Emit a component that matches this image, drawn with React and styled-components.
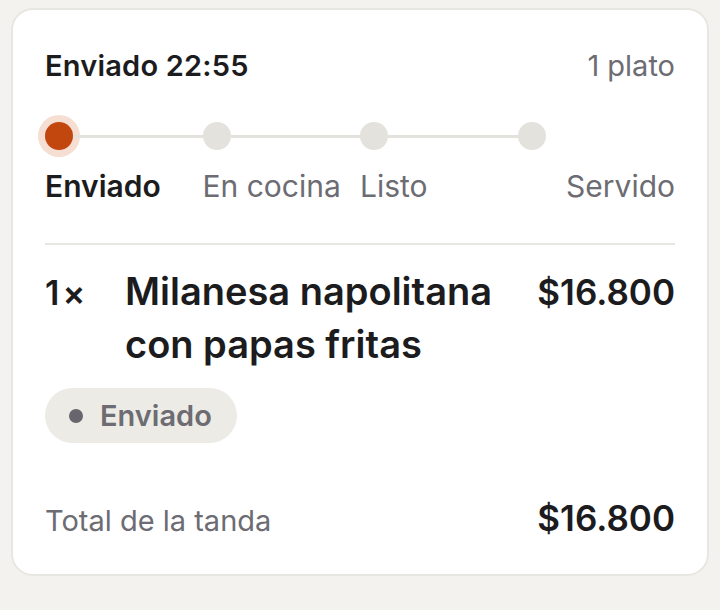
import React from "react";
import styled, { createGlobalStyle } from "styled-components";

const Global = createGlobalStyle`
  body {
    margin: 0;
    background: #f4f2ee;
    font-family: Inter, "Noto Sans", sans-serif;
    color: #1c1c1e;
  }
`;

const Page = styled.div`
  padding: 8px 11px;
`;

const Card = styled.div`
  background: #fff;
  border: 2px solid #e8e6e1;
  border-radius: 22px;
  padding: 38px 32px 36px;
`;

const Header = styled.div`
  display: flex;
  justify-content: space-between;
  align-items: baseline;
  line-height: 36px;
`;

const Title = styled.span`
  font-size: 29px;
  font-weight: 600;
  letter-spacing: 0.2px;
`;

const Muted = styled.span`
  font-size: 29px;
  color: #6c6c72;
`;

const Steps = styled.div`
  display: grid;
  grid-template-columns: repeat(4, 1fr);
  margin-top: 30px;
`;

const Step = styled.div`
  display: flex;
  flex-direction: column;
  align-items: ${(p) => (p.$last ? "flex-end" : "stretch")};
`;

const Track = styled.div`
  display: flex;
  align-items: center;
  width: 100%;
  height: 44px;
`;

const Dot = styled.span`
  width: 28px;
  height: 28px;
  border-radius: 50%;
  flex: none;
  background: ${(p) => (p.$active ? "#c2470f" : "#e4e2dc")};
  box-shadow: ${(p) => (p.$active ? "0 0 0 7px #f6ded3" : "none")};
`;

const Line = styled.span`
  flex: 1;
  height: 3px;
  background: #e4e2dc;
`;

const StepLabel = styled.span`
  margin-top: 10px;
  font-size: 30px;
  line-height: 36px;
  font-weight: ${(p) => (p.$active ? 600 : 400)};
  color: ${(p) => (p.$active ? "#1c1c1e" : "#6c6c72")};
`;

const Divider = styled.hr`
  border: none;
  height: 2px;
  background: #e8e6e1;
  margin: 39px 0 0;
`;

const Item = styled.div`
  display: grid;
  grid-template-columns: 80px 1fr auto;
  align-items: baseline;
  margin-top: 20px;
  line-height: 53px;
`;

const Qty = styled.span`
  font-size: 34px;
  font-weight: 600;
  letter-spacing: 3px;
`;

const Name = styled.span`
  font-size: 38px;
  font-weight: 600;
`;

const Price = styled.span`
  font-size: 35px;
  font-weight: 600;
  line-height: 40px;
`;

const Badge = styled.span`
  display: inline-flex;
  align-items: center;
  gap: 17px;
  margin-top: 17px;
  height: 55px;
  padding: 0 25px 0 24px;
  border-radius: 28px;
  background: #edebe6;
  color: #6c6c72;
  font-size: 29px;
  font-weight: 600;
`;

const BadgeDot = styled.span`
  width: 14px;
  height: 14px;
  border-radius: 50%;
  background: #66666c;
`;

const Footer = styled.div`
  display: flex;
  justify-content: space-between;
  align-items: baseline;
  margin-top: 55px;
`;

const steps = ["Enviado", "En cocina", "Listo", "Servido"];

export default function App() {
  return (
    <Page>
      <Global />
      <Card>
        <Header>
          <Title>Enviado 22:55</Title>
          <Muted>1 plato</Muted>
        </Header>
        <Steps>
          {steps.map((s, i) => (
            <Step key={s} $last={i === steps.length - 1}>
              <Track>
                <Dot $active={i === 0} />
                {i < steps.length - 1 && <Line />}
              </Track>
              <StepLabel $active={i === 0}>{s}</StepLabel>
            </Step>
          ))}
        </Steps>
        <Divider />
        <Item>
          <Qty>1×</Qty>
          <Name>
            Milanesa napolitana
            <br />
            con papas fritas
          </Name>
          <Price>$16.800</Price>
        </Item>
        <Badge>
          <BadgeDot />
          Enviado
        </Badge>
        <Footer>
          <Muted>Total de la tanda</Muted>
          <Price>$16.800</Price>
        </Footer>
      </Card>
    </Page>
  );
}
